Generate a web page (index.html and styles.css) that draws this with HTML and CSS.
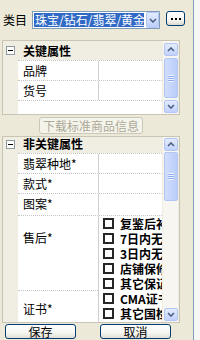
FILE: index.html
```html
<!DOCTYPE html>
<html lang="zh-CN">
<head>
<meta charset="utf-8">
<title>属性</title>
<link rel="stylesheet" href="styles.css">
</head>
<body>
<div class="window">
  <div class="main">
    <div class="topbar">
      <span class="lbl">类目</span>
      <div class="combo">
        <span class="combo-text">珠宝/钻石/翡翠/黄金</span>
        <span class="combo-btn"><svg width="8" height="5" viewBox="0 0 8 5"><path d="M1 1 L4 4 L7 1" fill="none" stroke="#4d6185" stroke-width="1.6"/></svg></span>
      </div>
      <button class="dots"><i></i><i></i><i></i></button>
    </div>

    <div class="group g1">
      <div class="grid">
        <div class="ghead"><span class="toggle"></span>关键属性</div>
        <div class="gbody">
          <div class="gutter"></div>
          <div class="table">
            <div class="row"><div class="k">品牌</div><div class="v"></div></div>
            <div class="row"><div class="k">货号</div><div class="v"></div></div>
          </div>
        </div>
      </div>
      <div class="vscroll">
        <span class="sbtn"><svg width="8" height="5" viewBox="0 0 8 5"><path d="M1 4 L4 1 L7 4" fill="none" stroke="#4d6185" stroke-width="1.6"/></svg></span>
        <span class="thumb t1"><i class="grip"></i></span>
        <span class="sbtn down"><svg width="8" height="5" viewBox="0 0 8 5"><path d="M1 1 L4 4 L7 1" fill="none" stroke="#4d6185" stroke-width="1.6"/></svg></span>
      </div>
    </div>

    <div class="actions"><button class="dl" disabled>下载标准商品信息</button></div>

    <div class="group g2">
      <div class="grid">
        <div class="ghead"><span class="toggle"></span>非关键属性</div>
        <div class="gbody">
          <div class="gutter"></div>
          <div class="table">
            <div class="row"><div class="k">翡翠种地*</div><div class="v"></div></div>
            <div class="row"><div class="k">款式*</div><div class="v"></div></div>
            <div class="row tall"><div class="k">图案*</div><div class="v"></div></div>
            <div class="row merged">
              <div class="kcol">
                <div class="k after">售后*</div>
                <div class="k cert">证书*</div>
              </div>
              <div class="checks">
                <div class="chk"><span class="box"></span>复鉴后补偿</div>
                <div class="chk"><span class="box"></span>7日内无理由退货</div>
                <div class="chk"><span class="box"></span>3日内无理由换货</div>
                <div class="chk"><span class="box"></span>店铺保修</div>
                <div class="chk"><span class="box"></span>其它保证</div>
                <div class="chk"><span class="box"></span>CMA证书</div>
                <div class="chk"><span class="box"></span>其它国检证书</div>
                <div class="chk"><span class="box"></span>其它证书</div>
              </div>
            </div>
          </div>
        </div>
      </div>
      <div class="vscroll">
        <span class="sbtn"><svg width="8" height="5" viewBox="0 0 8 5"><path d="M1 4 L4 1 L7 4" fill="none" stroke="#4d6185" stroke-width="1.6"/></svg></span>
        <span class="thumb t2"><i class="grip"></i></span>
        <span class="sbtn down"><svg width="8" height="5" viewBox="0 0 8 5"><path d="M1 1 L4 4 L7 1" fill="none" stroke="#4d6185" stroke-width="1.6"/></svg></span>
      </div>
    </div>

    <div class="footer">
      <button class="btn">保存</button>
      <button class="btn">取消</button>
    </div>
  </div>
  <div class="edge"></div>
</div>
</body>
</html>
```

FILE: styles.css
```css
* { box-sizing: border-box; }
html, body { margin: 0; padding: 0; }
body {
  width: 200px;
  height: 340px;
  overflow: hidden;
  background: #ece9d8;
  font-family: "Noto Sans CJK SC", "Noto Sans", sans-serif;
  font-size: 12px;
  color: #000;
}
.window { display: flex; height: 340px; }
.main { width: 193px; }
.edge { width: 7px; border-left: 1px solid #7f9db9; background: #f6f6f4; }

/* top bar */
.topbar { display: flex; align-items: flex-start; height: 29px; padding: 11px 0 0 3px; }
.lbl { width: 29px; line-height: 18px; }
.combo { display: flex; width: 128px; height: 18px; border: 1px solid #7f9db9; background: #fff; }
.combo-text {
  width: 110px; height: 14px; margin: 1px 0 1px 1px; padding-left: 1px;
  background: #316ac5; color: #fff; line-height: 14px;
  white-space: nowrap; overflow: hidden;
}
.combo-btn {
  width: 13px; height: 16px; margin-left: 2px;
  border: 1px solid #b3c6f3; border-radius: 2px;
  background: linear-gradient(#e3ebfe, #bccffb);
  display: flex; align-items: center; justify-content: center;
}
.dots {
  margin-left: 6px; width: 19px; height: 15px; padding: 0 0 2px 0;
  border: 1px solid #003c74; border-radius: 3px;
  background: linear-gradient(#ffffff, #f4f4f0 65%, #dcd8cc);
  display: flex; align-items: flex-end; justify-content: center; gap: 2px;
}
.dots i { width: 2px; height: 2px; background: #000; margin-bottom: 3px; }

/* groups */
.group { display: flex; margin-left: 2px; width: 178px; border: 1px solid #c8c5b4; background: #f0eee3; }
.g1 { margin-top: 11px; height: 75px; }
.g2 { margin-top: 2px; height: 187px; }
.grid { width: 159px; display: flex; flex-direction: column; }
.ghead { display: flex; align-items: center; font-weight: bold; line-height: 14px; }
.g1 .ghead { height: 19px; }
.g2 .ghead { height: 16px; padding-bottom: 2px; }
.toggle {
  position: relative; width: 9px; height: 9px; margin: 0 8px 0 3px;
  border: 1px solid #8e9aa0; background: #fff;
}
.toggle::after { content: ""; position: absolute; left: 1px; top: 3px; width: 5px; height: 1px; background: #000; }
.gbody { display: flex; flex: 1; min-height: 0; }
.gutter { width: 15px; }
.table { width: 144px; background: #fff; border-top: 1px dotted #c4c4c4; overflow: hidden; }
.row { display: flex; height: 20px; border-bottom: 1px dotted #c4c4c4; }
.row.tall { height: 22px; }
.k {
  width: 81px; padding-left: 5px; border-right: 1px solid #cfcfcf;
  line-height: 19px; white-space: nowrap; overflow: hidden;
}
.v { flex: 1; }
.row.merged { height: 106px; border-bottom: none; }
.kcol { width: 81px; border-right: 1px solid #cfcfcf; display: flex; flex-direction: column; }
.kcol .k { width: auto; border-right: none; }
.k.after { height: 75px; padding-top: 12px; border-bottom: 1px dotted #c4c4c4; }
.k.cert { flex: 1; padding-top: 8px; }
.checks { flex: 1; overflow: hidden; }
.chk { display: flex; align-items: flex-start; height: 15px; line-height: 15px; font-weight: bold; white-space: nowrap; }
.box { flex-shrink: 0; width: 11px; height: 11px; margin: 2px 6px 0 4px; border: 2px solid #262626; background: #fff; }

/* scrollbars */
.vscroll { width: 15px; margin-left: 1px; display: flex; flex-direction: column; align-items: center; background: #f7f6f1; }
.g1 .vscroll { padding: 2px 0 1px; }
.g2 .vscroll { padding: 1px 0 1px; }
.sbtn {
  width: 14px; height: 13px; flex-shrink: 0;
  border: 1px solid #b3c6f3; border-radius: 2px;
  background: linear-gradient(#e3ebfe, #c1d2fb);
  display: flex; align-items: center; justify-content: center;
}
.sbtn.down { margin-top: auto; }
.thumb {
  width: 14px; flex-shrink: 0;
  border: 1px solid #b3c6f3; border-radius: 2px;
  background: linear-gradient(90deg, #d0ddfd, #bacdfa);
  display: flex; align-items: center; justify-content: center;
}
.t1 { margin-top: 2px; height: 40px; }
.t2 { margin-top: 1px; height: 49px; }
.grip { width: 6px; height: 7px; background: repeating-linear-gradient(#eef3fe 0 1px, #8eaaf0 1px 2px); }

/* buttons */
.actions { display: flex; justify-content: center; width: 178px; margin: 2px 0 0 2px; }
.dl {
  width: 104px; height: 17px; padding: 0;
  border: 1px solid #c9c7ba; border-radius: 3px; background: #f5f4ea;
  color: #aca899; font: inherit; line-height: 15px;
}
.footer { display: flex; gap: 24px; padding-left: 5px; margin-top: 1px; }
.btn {
  width: 71px; height: 15px; padding: 0;
  border: 1px solid #003c74; border-radius: 3px;
  background: linear-gradient(#ffffff, #f4f4f0 60%, #e2ded3);
  color: #000; font: inherit; line-height: 13px;
}
```
